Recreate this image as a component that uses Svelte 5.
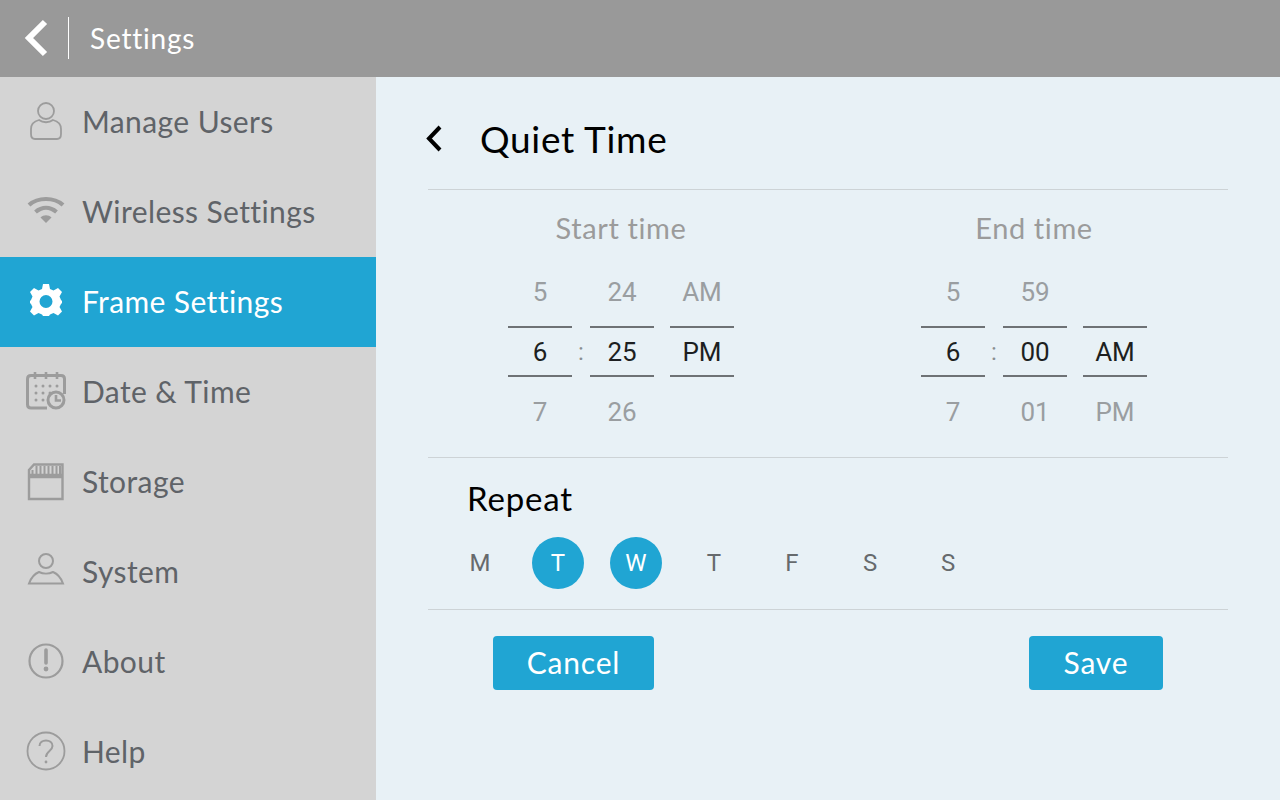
<script>
	const menu = [
		{ id: 'users', label: 'Manage Users' },
		{ id: 'wifi', label: 'Wireless Settings' },
		{ id: 'gear', label: 'Frame Settings', active: true },
		{ id: 'date', label: 'Date & Time' },
		{ id: 'storage', label: 'Storage' },
		{ id: 'system', label: 'System' },
		{ id: 'about', label: 'About' },
		{ id: 'help', label: 'Help' }
	];

	const pickers = [
		{
			title: 'Start time',
			cols: [
				['5', '6', '7'],
				['24', '25', '26'],
				['AM', 'PM', '']
			]
		},
		{
			title: 'End time',
			cols: [
				['5', '6', '7'],
				['59', '00', '01'],
				['', 'AM', 'PM']
			]
		}
	];

	const days = [
		{ d: 'M' },
		{ d: 'T', on: true },
		{ d: 'W', on: true },
		{ d: 'T' },
		{ d: 'F' },
		{ d: 'S' },
		{ d: 'S' }
	];
</script>

<div class="app">
	<header class="topbar">
		<svg class="back" width="26" height="38" viewBox="0 0 26 38">
			<path d="M23 3 L7 19 L23 35" fill="none" stroke="#fff" stroke-width="6" />
		</svg>
		<span class="sep"></span>
		<span class="top-title">Settings</span>
	</header>

	<div class="body">
		<nav class="sidebar">
			{#each menu as item}
				<div class="item" class:active={item.active}>
					<span class="icon">
						{#if item.id === 'users'}
							<svg width="40" height="40" viewBox="0 0 40 40" fill="none" stroke="#9c9c9c" stroke-width="1.8">
								<circle cx="20" cy="10" r="8" />
								<path d="M13 19 C9 20 5 23 5 28 V33 C5 37 7 38 9 38 H31 C33 38 35 37 35 33 V28 C35 23 31 20 27 19 C23 22 17 22 13 19 Z" />
							</svg>
						{:else if item.id === 'wifi'}
							<svg width="40" height="40" viewBox="0 0 40 40" fill="none" stroke="#9c9c9c" stroke-width="4.2">
								<path d="M3 14 C12 6 28 6 37 14" />
								<path d="M9.500 21 C16 15.500 24 15.500 30.500 21" />
								<path d="M14.500 26.500 L20 32 L25.500 26.500 C22.500 23.500 17.500 23.500 14.500 26.500 Z" fill="#9c9c9c" stroke="none" />
							</svg>
						{:else if item.id === 'gear'}
							<svg width="40" height="40" viewBox="0 0 40 40">
								<path fill="#fff" fill-rule="evenodd" d="M17 4 H23 L24 9 L27.500 10.500 L32 8 L36 12 L33.500 16.500 L35 20 L36 21 V23 L35 24 L33.500 27 L36 31.500 L32 35.500 L27.500 33 L24 34.500 L23 36 H17 L16 34.500 L12.500 33 L8 35.500 L4 31.500 L6.500 27 L5 24 L4 23 V21 L5 20 L6.500 16.500 L4 12 L8 8 L12.500 10.500 L16 9 Z M20 15 A6.500 6.500 0 1 0 20 28 A6.500 6.500 0 1 0 20 15 Z" transform="translate(0 -1)" />
							</svg>
						{:else if item.id === 'date'}
							<svg width="40" height="40" viewBox="0 0 40 40" fill="none" stroke="#9c9c9c">
								<path stroke-width="3" d="M21 37 H5 C2.500 37 1.500 36 1.500 33.500 V8 C1.500 5.500 2.500 4.500 5 4.500 H35 C37.500 4.500 38.500 5.500 38.500 8 V23" />
								<path stroke-width="2.600" d="M9 1 V8 M20 1 V8 M31 1 V8" />
								<circle cx="30" cy="29" r="8" stroke-width="3" />
								<path d="M30 24 V29.500 H35" stroke-width="2.600" />
								<g fill="#9c9c9c" stroke="none">
									<circle cx="10" cy="15" r="1.500" /><circle cx="17" cy="15" r="1.500" /><circle cx="24" cy="15" r="1.500" /><circle cx="31" cy="15" r="1.500" />
									<circle cx="10" cy="22" r="1.500" /><circle cx="17" cy="22" r="1.500" /><circle cx="24" cy="22" r="1.500" />
									<circle cx="10" cy="29" r="1.500" /><circle cx="17" cy="29" r="1.500" />
								</g>
							</svg>
						{:else if item.id === 'storage'}
							<svg width="40" height="40" viewBox="0 0 40 40" fill="none" stroke="#9c9c9c">
								<path stroke-width="2.400" d="M3 38 V9 L8 3.500 H36.500 V38 Z" />
								<path stroke-width="4.500" d="M3 15 H36.500" />
								<path stroke-width="2" d="M10.500 5 V13 M14.500 5 V13 M18.500 5 V13 M22.500 5 V13 M26.500 5 V13 M30.500 5 V13 M34 5 V13 M6.500 9 V13" />
							</svg>
						{:else if item.id === 'system'}
							<svg width="40" height="40" viewBox="0 0 40 40" fill="none" stroke="#9c9c9c" stroke-width="2">
								<circle cx="20" cy="10" r="7" />
								<path d="M13 21 C8 23 5 27 3 32.500 H37 C35 27 32 23 27 21 C23 23 17 23 13 21 Z" />
							</svg>
						{:else if item.id === 'about'}
							<svg width="40" height="40" viewBox="0 0 40 40" fill="none" stroke="#9c9c9c">
								<circle cx="20" cy="20" r="16.500" stroke-width="2.200" />
								<path d="M20 9 V22" stroke-width="3.600" stroke-linecap="round" />
								<circle cx="20" cy="28" r="2.400" fill="#9c9c9c" stroke="none" />
							</svg>
						{:else}
							<svg width="40" height="40" viewBox="0 0 40 40" fill="none" stroke="#9c9c9c" stroke-width="1.800">
								<circle cx="20" cy="20" r="18.500" />
								<path d="M13.500 15 C13.500 7.500 26.500 7.500 26.500 15 C26.500 20 20 20 20 26" stroke-width="2" />
								<circle cx="20" cy="31" r="1.400" fill="#9c9c9c" stroke="none" />
							</svg>
						{/if}
					</span>
					<span class="label">{item.label}</span>
				</div>
			{/each}
		</nav>

		<main class="content">
			<div class="page-head">
				<svg width="20" height="30" viewBox="0 0 20 30">
					<path d="M16 3 L5 14.500 L16 26" fill="none" stroke="#000" stroke-width="4" />
				</svg>
				<h1>Quiet Time</h1>
			</div>

			<section class="times">
				{#each pickers as p}
					<div class="picker">
						<div class="picker-title">{p.title}</div>
						<div class="wheels">
							{#each p.cols as col, i}
								<div class="wheel" class:last={i === 2}>
									<div class="val prev">{col[0]}</div>
									<div class="val current">{col[1]}</div>
									<div class="val next">{col[2]}</div>
								</div>
								{#if i === 0}
									<div class="colon">:</div>
								{/if}
							{/each}
						</div>
					</div>
				{/each}
			</section>

			<section class="repeat">
				<h2>Repeat</h2>
				<div class="days">
					{#each days as day}
						<div class="day" class:on={day.on}>{day.d}</div>
					{/each}
				</div>
			</section>

			<div class="actions">
				<button class="btn cancel">Cancel</button>
				<button class="btn save">Save</button>
			</div>
		</main>
	</div>
</div>

<style>
	:global(body) {
		margin: 0;
	}

	.app {
		width: 1280px;
		height: 800px;
		overflow: hidden;
		display: flex;
		flex-direction: column;
		font-family: Lato, "Open Sans", sans-serif;
		font-variant-ligatures: none;
	}

	.topbar {
		height: 77px;
		flex: none;
		background: #999999;
		display: flex;
		align-items: center;
		padding-left: 22px;
		padding-bottom: 1px;
		box-sizing: border-box;
		color: #fff;
	}

	.sep {
		width: 1px;
		height: 42px;
		background: #fff;
		margin-left: 20px;
		margin-right: 21px;
	}

	.top-title {
		font-size: 28px;
		letter-spacing: 0.8px;
	}

	.body {
		flex: 1;
		display: flex;
		min-height: 0;
	}

	.sidebar {
		width: 376px;
		flex: none;
		background: #d4d4d4;
	}

	.item {
		height: 90px;
		display: flex;
		align-items: center;
		padding-left: 26px;
		color: #5f6368;
		font-size: 30px;
		letter-spacing: 0.4px;
	}

	.item.active {
		background: #20a5d3;
		color: #fff;
	}

	.label {
		margin-top: -2px;
		margin-left: -2px;
	}

	.icon {
		width: 40px;
		height: 40px;
		display: flex;
		margin-right: 18px;
		margin-top: -2px;
	}

	.content {
		flex: 1;
		background: #e8f1f6;
		padding: 0 52px;
	}

	.page-head {
		height: 112px;
		display: flex;
		align-items: center;
		border-bottom: 1px solid #cdd3d6;
	}

	.page-head svg {
		margin-left: -4px;
		margin-right: 37px;
		margin-top: 12px;
	}

	h1 {
		margin: 10px 0 0 -1px;
		font-size: 37px;
		font-weight: 400;
		letter-spacing: 0.7px;
		color: #000;
	}

	.times {
		display: flex;
		gap: 187px;
		padding-left: 80px;
		height: 267px;
		border-bottom: 1px solid #cdd3d6;
	}

	.picker {
		width: 226px;
	}

	.picker-title {
		height: 76px;
		padding-top: 19px;
		box-sizing: border-box;
		text-align: center;
		font-size: 29px;
		letter-spacing: 0.6px;
		line-height: 37px;
		color: #9b9b9b;
	}

	.wheels {
		display: flex;
		font-family: Roboto, sans-serif;
		font-size: 26px;
	}

	.wheel {
		width: 64px;
	}

	.wheel.last {
		margin-left: 16px;
	}

	.colon {
		width: 18px;
		text-align: center;
		color: #8a8f92;
		font-size: 24px;
		line-height: 60px;
		margin-top: 56px;
	}

	.val {
		height: 60px;
		text-align: center;
		color: #9a9ea1;
	}

	.val.prev {
		line-height: 52px;
	}

	.val.next {
		line-height: 70px;
	}

	.val.current {
		height: 47px;
		line-height: 48px;
		color: #1d1f21;
		border-top: 2px solid #6e7275;
		border-bottom: 2px solid #6e7275;
	}

	.repeat {
		height: 151px;
		border-bottom: 1px solid #cdd3d6;
	}

	h2 {
		margin: 0;
		padding: 19px 0 0 39px;
		font-size: 33px;
		letter-spacing: 0.8px;
		line-height: 42px;
		font-weight: 400;
		color: #000;
	}

	.days {
		display: flex;
		margin-top: 18px;
		margin-left: 26px;
		gap: 26px;
	}

	.day {
		width: 52px;
		height: 52px;
		border-radius: 50%;
		display: flex;
		align-items: center;
		justify-content: center;
		font-family: Roboto, sans-serif;
		font-size: 24px;
		color: #666a6d;
	}

	.day.on {
		background: #20a5d3;
		color: #fff;
	}

	.actions {
		display: flex;
		justify-content: space-between;
		padding: 26px 65px 0;
	}

	.btn {
		height: 54px;
		border: none;
		border-radius: 4px;
		background: #20a5d3;
		color: #fff;
		font-family: Lato, sans-serif;
		font-size: 30px;
		letter-spacing: 0.8px;
		padding: 0 0 2px;
	}

	.cancel {
		width: 161px;
	}

	.save {
		width: 134px;
	}
</style>
